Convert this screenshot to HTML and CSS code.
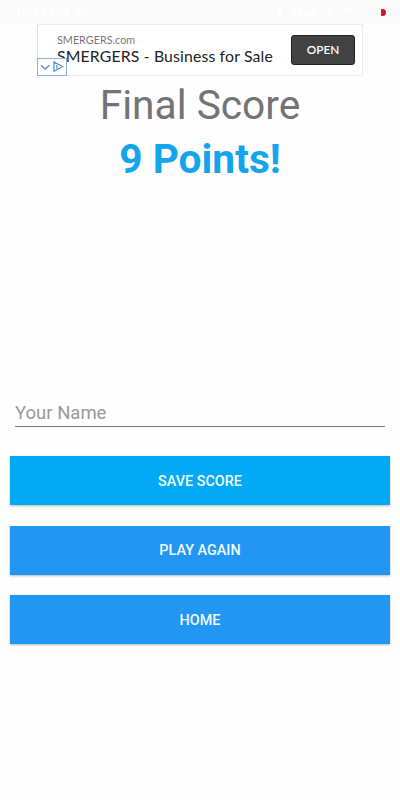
FILE: index.html
```html
<!DOCTYPE html>
<html lang="en">
<head>
<meta charset="utf-8">
<title>Final Score</title>
<link rel="stylesheet" href="styles.css">
</head>
<body>
<header class="status">
  <span class="clock">10:26 PM</span>
  <svg class="app" width="12" height="10" viewBox="0 0 12 10"><path d="M1 1h10v8H1zM3 4h6M3 6h4"/></svg>
  <svg class="signals" width="84" height="12" viewBox="0 0 84 12"><path d="M1 3l4 6-2 2V1l2 2-4 6M16 2v8M19 2v8M22 3h4v6h-4zM30 10V8M33 10V6M36 10V4M39 10V2M47 10V8M50 10V6M53 10V4M56 10V2M66 5q6-5 12 0M68 7q4-3 8 0M71 9h2"/></svg>
  <span class="battery"></span>
</header>
<section class="ad">
  <div class="ad-copy">
    <div class="domain">SMERGERS.com</div>
    <div class="headline">SMERGERS - Business for Sale</div>
  </div>
  <button class="open">OPEN</button>
  <span class="ad-choices">
    <svg width="28" height="16" viewBox="0 0 28 16"><path d="M3 6.2l4.2 3.9 4.2-3.9M16 3v9.2l8.5-4.7zM18.8 6v3.5"/></svg>
  </span>
</section>
<main>
  <h1>Final Score</h1>
  <p class="points">9 Points!</p>
  <div class="name-field">Your Name</div>
  <button class="action save">SAVE SCORE</button>
  <button class="action">PLAY AGAIN</button>
  <button class="action">HOME</button>
</main>
</body>
</html>
```
FILE: styles.css
```css
* { box-sizing: border-box; }
body {
  margin: 0;
  height: 800px;
  background: #fefefe;
  font-family: Roboto, sans-serif;
  white-space: nowrap;
}
button { border: 0; padding: 0; font-family: inherit; }
.status {
  height: 24px;
  padding: 0 14px 0 15px;
  display: flex;
  align-items: center;
  background: #fafafa;
  color: #fff;
}
.clock { width: 54px; font-size: 12px; font-weight: 500; letter-spacing: .4px; }
.status svg { fill: none; stroke: #fff; stroke-width: 1.3; }
.app { margin-left: 6px; }
.signals { margin-left: auto; }
.battery {
  width: 5px;
  height: 7px;
  margin-left: 21px;
  border-radius: 1px 4px 4px 1px;
  background: #cf1820;
}
.ad {
  position: relative;
  width: 326px;
  height: 52px;
  margin: 0 auto;
  padding: 0 7px 0 19px;
  display: flex;
  align-items: center;
  justify-content: space-between;
  border: 1px solid #ececec;
  border-left-color: #d9dde0;
  background: #fff;
}
.ad-copy { font-family: Lato, sans-serif; padding-bottom: 2px; }
.domain { font-size: 10.8px; line-height: 14px; color: #777; }
.headline { font-size: 15.8px; line-height: 18px; letter-spacing: .15px; color: #222; }
.open {
  width: 64px;
  height: 30px;
  border: 1px solid #222;
  border-radius: 3px;
  background: #424242;
  color: #fff;
  font: 600 11.8px Lato, sans-serif;
  padding-bottom: 2px;
}
.ad-choices {
  position: absolute;
  left: -1px;
  bottom: -1px;
  width: 30px;
  height: 18px;
  border: 1px solid #86b5d8;
  background: #fff;
}
.ad-choices svg { display: block; fill: none; stroke: #5594c4; stroke-width: 1.3; }
main {
  padding: 0 10px;
  display: flex;
  flex-direction: column;
}
h1, .points {
  margin: 0;
  text-align: center;
  font-size: 40.7px;
  line-height: 54px;
}
h1 { padding-top: 2px; color: #737373; font-weight: 400; }
.points { color: #12a5ec; font-weight: 700; }
.name-field {
  height: 30px;
  margin: 211px 5px 29px;
  border-bottom: 1px solid #777;
  color: #999;
  font-size: 18.5px;
  line-height: 32px;
}
.action {
  height: 49px;
  margin-bottom: 20.5px;
  padding-top: 1px;
  background: #2196f3;
  color: #effcff;
  font-size: 14.4px;
  font-weight: 500;
  box-shadow: 0 1px 2px rgba(0, 0, 0, .28);
}
.save { background: #03a9f4; }
```
